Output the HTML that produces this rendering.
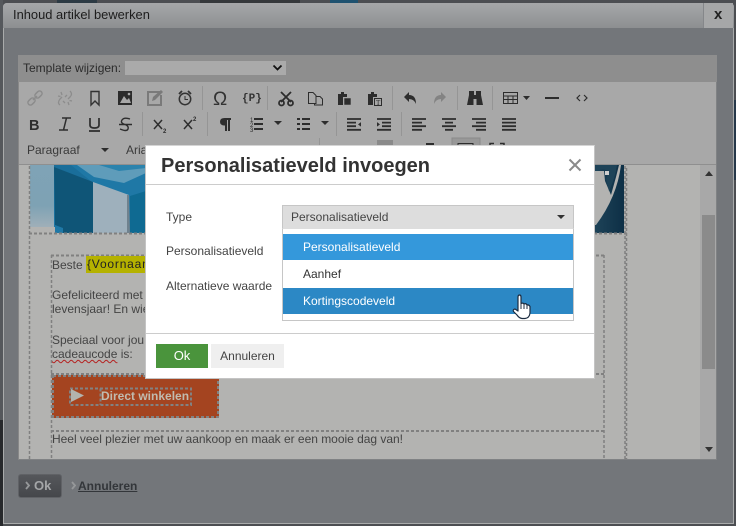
<!DOCTYPE html>
<html><head><meta charset="utf-8"><style>
html,body{margin:0;padding:0}
body{width:736px;height:526px;overflow:hidden;position:relative;background:#4c4e52;font-family:"Liberation Sans",sans-serif;font-size:12px;color:#333}
div,span.a{position:absolute;box-sizing:border-box}
.t{white-space:nowrap;line-height:14px}
</style></head><body>
<div style="left:0;top:0;width:3px;height:526px;background:#55585c"></div>
<div style="left:0;top:420px;width:3px;height:106px;background:#27292c"></div>
<div style="left:57px;top:0;width:40px;height:3px;background:#2c3a44"></div>
<div style="left:200px;top:0;width:100px;height:3px;background:#35383b"></div>
<div style="left:330px;top:0;width:28px;height:3px;background:#1f5270"></div>
<div style="left:734px;top:100px;width:2px;height:80px;background:#26384a"></div>
<div style="left:3px;top:3px;width:731px;height:521px;background:#73767a;border:1px solid #a9abab;border-radius:4px 4px 0 0"></div>
<div style="left:3px;top:3px;width:731px;height:25px;background:linear-gradient(#a6a7a9,#8d8f91);border-radius:4px 4px 0 0"></div>
<div class="t" style="left:13px;top:8px;font-size:12.9px;color:#1d1d1d">Inhoud artikel bewerken</div>
<div style="left:703px;top:3px;width:30px;height:25px;background:#a6a7a8;border-left:1px solid #85878a"></div>
<div class="t" style="left:714px;top:8px;font-size:15px;font-weight:bold;color:#222">x</div>

<div style="left:18px;top:55px;width:699px;height:405px;background:#b3b3b1;border:1px solid #808284;border-top:0;border-left:1px solid #888"></div>
<div style="left:18px;top:55px;width:699px;height:27px;background:#8e8e8e"></div>
<div class="t" style="left:23px;top:61px;font-size:12px;color:#2b2b2b">Template wijzigen:</div>
<div style="left:125px;top:61px;width:161px;height:14px;background:#aaa"></div>
<svg style="position:absolute;left:272px;top:64px" width="12" height="8"><path d="M1.500 1.500L5.500 5.500L9.500 1.500" fill="none" stroke="#111" stroke-width="1.800"/></svg>
<div style="left:19px;top:82px;width:697px;height:83px;background:#a8a8a8"></div>
<div style="left:19px;top:164px;width:697px;height:1px;background:#8f8f8f"></div>

<!-- content image -->
<svg style="position:absolute;left:19px;top:165px" width="606" height="68" viewBox="0 0 606 68">
<defs>
<linearGradient id="l" x1="0" x2="0" y1="0" y2="1"><stop offset="0" stop-color="#7fa3b6"/><stop offset=".6" stop-color="#7ea2b4"/><stop offset="1" stop-color="#a9b3ba"/></linearGradient>
<linearGradient id="d" x1="0" x2="1" y1="0" y2="0"><stop offset="0" stop-color="#1e4358"/><stop offset="1" stop-color="#0d2f46"/></linearGradient>
</defs>
<rect x="11" y="0" width="165" height="68" fill="#1f78a6"/>
<rect x="11" y="0" width="24" height="68" fill="url(#l)"/>
<path d="M35 0H52L73 17L35 2Z" fill="#1a6e9a"/>
<path d="M58 0H127V8L105 18L75 12Z" fill="#5f9cba"/>
<path d="M80 0H127V3L100 6Z" fill="#2b83ad"/>
<path d="M35 2L74 17V68H44V63L36 60Z" fill="#0f5577"/>
<path d="M74 17L110 30V68H74Z" fill="#9eb0bc"/>
<path d="M110 30L111 68H108V30Z" fill="#70828e"/>
<path d="M111 31L127 26V68H111Z" fill="#0f6a92"/>
<path d="M11 62H36V68H11Z" fill="#b3b3b1"/>
<rect x="576" y="0" width="29" height="68" fill="url(#d)"/>
<path d="M576 6H585L586 16L592 30L597 12L600 0L602 0Q598 32 577 60L576 60Z" fill="#b3b3b1"/>
<path d="M576 0H598Q596 14 590 26L587 14L590 6L584 4L576 6Z" fill="#1e4358"/>
<rect x="586" y="6" width="4" height="4" fill="#d0d0d0"/>
</svg>
<!-- dashes -->
<svg style="position:absolute;left:0;top:0" width="736" height="526" fill="none" stroke="#808080" stroke-width="2" stroke-dasharray="3 2">
<path d="M29.500 166V459M625 166V459M626.500 168V459M51.500 255V459M604 255V459" stroke-width="1.500"/>
<path d="M29 233.500H627M51 255.500H604M51 374H604M51 431H604"/>
</svg>
<div class="t" style="left:52px;top:258px;color:#444">Beste</div>
<div class="t" style="left:86px;top:256px;height:17px;width:70px;background:#b5b200;color:#222;line-height:17px;padding-left:1px;letter-spacing:.8px">{Voornaam}</div>
<div class="t" style="left:52px;top:288px;color:#444">Gefeliciteerd met</div>
<div class="t" style="left:52px;top:302px;color:#444">levensjaar! En wie</div>
<div class="t" style="left:52px;top:333px;color:#444">Speciaal voor jou</div>
<div class="t" style="left:52px;top:347px;color:#444"><span style="text-decoration:underline wavy #b52020 1px">cadeaucode</span> is:</div>
<div style="left:52px;top:375px;width:167px;height:43px;background:#a44420"></div>
<svg style="position:absolute;left:0;top:0" width="736" height="526" fill="none" stroke="#828282" stroke-width="2" stroke-dasharray="3 2">
<path d="M53 376H218V417H53Z"/>
<path d="M70 388.500H191V405H70ZM100.500 388.500V405"/>
</svg>
<svg style="position:absolute;left:71px;top:389px" width="13" height="13"><path d="M0 0L13 6.500L0 13Z" fill="#b3b3ae"/></svg>
<div class="t" style="left:101px;top:389px;font-weight:bold;color:#c0bcb0">Direct winkelen</div>
<div class="t" style="left:52px;top:432px;color:#444;font-size:12px;letter-spacing:-.02px;width:560px;overflow:hidden">Heel veel plezier met uw aankoop en maak er een mooie dag van!</div>

<!-- scrollbar -->
<div style="left:700px;top:165px;width:16px;height:294px;background:#a8a8a8"></div>
<div style="left:702px;top:215px;width:13px;height:154px;background:#8b8b8b"></div>
<svg style="position:absolute;left:705px;top:171px" width="8" height="5"><path d="M4 0L8 5H0Z" fill="#333"/></svg>
<svg style="position:absolute;left:705px;top:447px" width="8" height="5"><path d="M0 0H8L4 5Z" fill="#333"/></svg>

<!-- toolbar icons -->
<svg style="position:absolute;left:0;top:0" width="736" height="526" viewBox="0 0 736 526">
<g stroke="#959595" stroke-width="1"><path d="M202.500 86V110M267.500 86V110M142.500 112V136M207.500 112V136M336.500 112V136M392.500 86V110M457.500 86V110M492.500 86V110M401.500 112V136M319.500 138V146"/></g>
<g fill="none" stroke="#8c8c8c" stroke-width="1.500">
<rect x="27.500" y="99" width="8" height="5" rx="2.500" transform="rotate(-45 31.500 101.500)"/>
<rect x="34.500" y="92" width="8" height="5" rx="2.500" transform="rotate(-45 38.500 94.500)"/>
<path d="M33 100L37 96"/>
<path d="M60 105Q57 103 60 99L62 97M70 91Q73 94 70 97L68 99M61 92L62 95M58 96L60.500 96.500M72 101L69.500 100.500M69 105L68 102M65 97L67 95M63 101L65 103" stroke-width="1.300"/>
</g>
<path d="M91 91.500H99V105L95 101L91 105Z" fill="none" stroke="#333" stroke-width="1.400"/>
<path d="M118 91H132V105H118Z" fill="#2b2b2b"/><path d="M120 103L124 96L127 100L129 98L131 103Z" fill="#a8a8a8"/><circle cx="129" cy="94" r="1.300" fill="#a8a8a8"/>
<path d="M160 92H148V105H161V95" fill="none" stroke="#7a7a7a" stroke-width="2"/><path d="M152 101L153 97L161 90L163 92L155 100Z" fill="#7a7a7a"/>
<circle cx="185" cy="99" r="5.700" fill="none" stroke="#333" stroke-width="1.500"/><path d="M185 96V99.500H188" fill="none" stroke="#333"/><path d="M179 94L182 91M191 94L188 91" stroke="#333" stroke-width="1.800"/>
<text x="213" y="105" font-family="Liberation Sans,sans-serif" font-size="19" fill="#333">Ω</text>
<text x="242" y="101" font-family="Liberation Mono,monospace" font-size="11" font-weight="bold" fill="#333">{P}</text>
<g fill="none" stroke="#2d2d2d" stroke-width="1.800"><path d="M281 92L291 102M291 92L281 102"/><circle cx="281.500" cy="103" r="2.500"/><circle cx="290.500" cy="103" r="2.500"/></g>
<path d="M308.500 92.500H313L316 95.500V103.500H308.500ZM316 96.500H320L322.500 99V105H314.500V103.500" fill="none" stroke="#2d2d2d" stroke-width="1"/>
<path d="M338 94H341V92H344V94H347V97H343V105H338Z" fill="#2d2d2d"/><path d="M344 98H351V105H344Z" fill="#2d2d2d" stroke="#a8a8a8" stroke-width=".6"/>
<path d="M368 94H371V92H374V94H377V97H373V105H368Z" fill="#2d2d2d"/><rect x="374.500" y="98.500" width="7" height="7" fill="none" stroke="#2d2d2d"/><text x="376" y="105" font-size="7" font-family="Liberation Serif,serif" fill="#2d2d2d">T</text>
<path d="M404 97L409 92V95Q416 95 416 104Q414 99 409 99V102Z" fill="#2d2d2d"/>
<path d="M446 97L441 92V95Q434 95 434 104Q436 99 441 99V102Z" fill="#838383"/>
<path d="M469 91H474V95H476V91H481V95L483 105H476.500V99H473.500V105H467L469 95Z" fill="#2d2d2d"/>
<path d="M503.500 92.500H517.500V103.500H503.500ZM503.500 96H517.500M503.500 99.500H517.500M508 96V103.500M513 96V103.500" fill="none" stroke="#2d2d2d"/><path d="M523 96H530L526.500 100Z" fill="#2d2d2d"/>
<rect x="545" y="97" width="14" height="2" fill="#2d2d2d"/>
<path d="M580 95L577 98L580 101M584 95L587 98L584 101" fill="none" stroke="#2d2d2d" stroke-width="1.200"/>

<text x="29" y="130" font-size="14.500" font-weight="bold" fill="#2d2d2d">B</text>
<path d="M62 118H71M59 130H68M66.500 118L63.500 130" stroke="#2d2d2d" stroke-width="1.500"/>
<path d="M90 118V125Q90 128 94.500 128T99 125V118M89 131H100" fill="none" stroke="#2d2d2d" stroke-width="1.700"/>
<path d="M130 119Q124 117 122 120T125 124.500Q129 126 128 129T120 129M119 124.500H132" fill="none" stroke="#2d2d2d" stroke-width="1.400"/>
<path d="M154 120L162 129M162 120L154 129" stroke="#2d2d2d" stroke-width="1.500"/><text x="163" y="133" font-size="6" font-weight="bold" fill="#2d2d2d">2</text>
<path d="M184 120L192 129M192 120L184 129" stroke="#2d2d2d" stroke-width="1.500"/><text x="193" y="121" font-size="6" font-weight="bold" fill="#2d2d2d">2</text>
<path d="M225 118H231V120H230V131H228V120H227V131H225V125.500Q220 125.500 220 121.700T225 118Z" fill="#2d2d2d"/>
<text x="250" y="122" font-size="6" fill="#2d2d2d">1</text><text x="250" y="127" font-size="6" fill="#2d2d2d">2</text><text x="250" y="132" font-size="6" fill="#2d2d2d">3</text>
<path d="M254 118H263V120H254ZM254 123H263V125H254ZM254 128H263V130H254Z" fill="#2d2d2d"/>
<path d="M274 121H282L278 125Z" fill="#2d2d2d"/>
<path d="M297 118H300V120H297ZM297 123H300V125H297ZM297 128H300V130H297ZM302 118H310V120H302ZM302 123H310V125H302ZM302 128H310V130H302Z" fill="#2d2d2d"/>
<path d="M321 121H329L325 125Z" fill="#2d2d2d"/>
<g fill="#2d2d2d" transform="translate(0 11) scale(1 .9)">
<path d="M347 119H361V121H347ZM347 123H356V125H347ZM347 127H356V129H347ZM347 131H361V133H347ZM361 123.500V128.500L358 126Z"/>
<path d="M377 119H391V121H377ZM382 123H391V125H382ZM382 127H391V129H382ZM377 131H391V133H377ZM377 123.500V128.500L380 126Z"/>
<path d="M412 119H426V121H412ZM412 123H422V125H412ZM412 127H426V129H412ZM412 131H422V133H412Z"/>
<path d="M442 119H456V121H442ZM445 123H453V125H445ZM442 127H456V129H442ZM445 131H453V133H445Z"/>
<path d="M472 119H486V121H472ZM476 123H486V125H476ZM472 127H486V129H472ZM476 131H486V133H476Z"/>
<path d="M502 119H516V121H502ZM502 123H516V125H502ZM502 127H516V129H502ZM502 131H516V133H502Z"/>
</g>
<path d="M101 148H109L105 152Z" fill="#2d2d2d"/>
<rect x="377" y="140" width="16" height="6" fill="#8a8a8a"/>
<rect x="426" y="143" width="8" height="3" fill="#2d2d2d"/>
<rect x="452" y="138" width="28" height="8" fill="#989898" stroke="#8a8a8a"/><path d="M458 146V143.500H473V146" fill="none" stroke="#2d2d2d"/>
<path d="M490 146V143.500H494M500 143.500H504V146" fill="none" stroke="#2d2d2d" stroke-width="1.500"/>
</svg>
<div class="t" style="left:27px;top:143px;color:#3a3a3a">Paragraaf</div>
<div class="t" style="left:126px;top:143px;color:#3a3a3a">Arial</div>

<!-- bottom buttons -->
<div style="left:18px;top:474px;width:44px;height:24px;background:linear-gradient(#55575b,#45474b);border:1px solid #606266;border-radius:3px"></div>
<div class="t" style="left:34px;top:479px;font-weight:bold;font-size:13px;color:#a4a6a8">Ok</div>
<svg style="position:absolute;left:25px;top:481px" width="5" height="9"><path d="M1 1L4 4.500L1 8" fill="none" stroke="#96989a" stroke-width="1.800"/></svg>
<svg style="position:absolute;left:71px;top:481px" width="5" height="9"><path d="M1 1L4 4.500L1 8" fill="none" stroke="#96989a" stroke-width="1.800"/></svg>
<div class="t" style="left:78px;top:479px;font-weight:bold;font-size:12px;color:#33363a;text-decoration:underline">Annuleren</div>

<!-- modal -->
<div style="left:145px;top:145px;width:450px;height:234px;background:#fff;border:1px solid #c4c4c4;border-top-color:#d5d5d5"></div>
<div class="t" style="left:161px;top:155px;height:22px;line-height:22px;font-size:20px;font-weight:bold;color:#333">Personalisatieveld invoegen</div>
<svg style="position:absolute;left:568px;top:158px" width="14" height="14"><path d="M1.500 1.500L12.500 12.500M12.500 1.500L1.500 12.500" stroke="#8a8a8a" stroke-width="2"/></svg>
<div style="left:146px;top:184px;width:448px;height:1px;background:#ccc"></div>
<div class="t" style="left:166px;top:210px;color:#444">Type</div>
<div class="t" style="left:166px;top:244px;color:#444">Personalisatieveld</div>
<div class="t" style="left:166px;top:279px;color:#444">Alternatieve waarde</div>
<div style="left:282px;top:205px;width:292px;height:24px;background:#ddd;border:1px solid #c6c6c6"></div>
<div class="t" style="left:291px;top:210px;color:#444">Personalisatieveld</div>
<svg style="position:absolute;left:557px;top:215px" width="8" height="4"><path d="M0 0H8L4 4Z" fill="#333"/></svg>
<div style="left:282px;top:228px;width:292px;height:93px;background:#fff;border:1px solid #c6c6c6;border-top:1px solid #ddd"></div>
<div style="left:283px;top:234px;width:290px;height:26px;background:#3498db"></div>
<div class="t" style="left:303px;top:240px;color:#fff">Personalisatieveld</div>
<div class="t" style="left:303px;top:267px;color:#333">Aanhef</div>
<div style="left:283px;top:288px;width:290px;height:26px;background:#2c88c5"></div>
<div class="t" style="left:303px;top:294px;color:#fff">Kortingscodeveld</div>
<div style="left:146px;top:333px;width:448px;height:1px;background:#ccc"></div>
<div class="t" style="left:156px;top:344px;width:52px;height:24px;line-height:24px;background:#4a943c;color:#fff;text-align:center;font-size:13px">Ok</div>
<div class="t" style="left:211px;top:344px;width:73px;height:24px;line-height:24px;background:#efefef;color:#444;text-align:center">Annuleren</div>
<svg style="position:absolute;left:512px;top:294px" width="20" height="26" viewBox="0 0 20 26"><path d="M6 3Q6 1 7.500 1T9 3V9.500Q11 8.500 12 10Q14 9 15 11Q17 10.500 18 12.500V19Q17.500 24 13 24.500H10Q7 24 5 21L1.500 17.500Q0.500 15.500 3 15L6 17Z" fill="#fff" stroke="#1c2c40" stroke-width="1.200" stroke-linejoin="round"/><path d="M9 9.500V15M12 10V15M15 11V15" stroke="#1c2c40" stroke-width="1"/></svg>
</body></html>
